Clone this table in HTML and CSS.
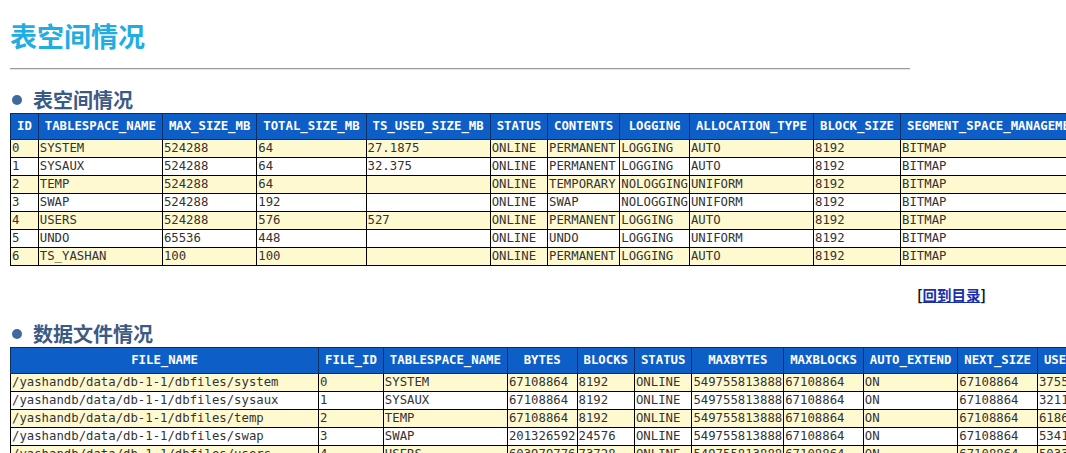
FILE: index.html
```html
<!DOCTYPE html>
<html lang="zh">
<head>
<meta charset="utf-8">
<title>表空间情况</title>
<link rel="stylesheet" href="styles.css">
</head>
<body>
<div class="page">
  <h1 class="title">表空间情况</h1>
  <hr class="rule">
  <h2 class="section">表空间情况</h2>
  <table class="grid">
    <thead>
      <tr><th>ID</th><th>TABLESPACE_NAME</th><th>MAX_SIZE_MB</th><th>TOTAL_SIZE_MB</th><th>TS_USED_SIZE_MB</th><th>STATUS</th><th>CONTENTS</th><th>LOGGING</th><th>ALLOCATION_TYPE</th><th>BLOCK_SIZE</th><th>SEGMENT_SPACE_MANAGEMENT</th></tr>
    </thead>
    <tbody>
      <tr><td>0</td><td>SYSTEM</td><td>524288</td><td>64</td><td>27.1875</td><td>ONLINE</td><td>PERMANENT</td><td>LOGGING</td><td>AUTO</td><td>8192</td><td>BITMAP</td></tr>
      <tr><td>1</td><td>SYSAUX</td><td>524288</td><td>64</td><td>32.375</td><td>ONLINE</td><td>PERMANENT</td><td>LOGGING</td><td>AUTO</td><td>8192</td><td>BITMAP</td></tr>
      <tr><td>2</td><td>TEMP</td><td>524288</td><td>64</td><td></td><td>ONLINE</td><td>TEMPORARY</td><td>NOLOGGING</td><td>UNIFORM</td><td>8192</td><td>BITMAP</td></tr>
      <tr><td>3</td><td>SWAP</td><td>524288</td><td>192</td><td></td><td>ONLINE</td><td>SWAP</td><td>NOLOGGING</td><td>UNIFORM</td><td>8192</td><td>BITMAP</td></tr>
      <tr><td>4</td><td>USERS</td><td>524288</td><td>576</td><td>527</td><td>ONLINE</td><td>PERMANENT</td><td>LOGGING</td><td>AUTO</td><td>8192</td><td>BITMAP</td></tr>
      <tr><td>5</td><td>UNDO</td><td>65536</td><td>448</td><td></td><td>ONLINE</td><td>UNDO</td><td>LOGGING</td><td>UNIFORM</td><td>8192</td><td>BITMAP</td></tr>
      <tr><td>6</td><td>TS_YASHAN</td><td>100</td><td>100</td><td></td><td>ONLINE</td><td>PERMANENT</td><td>LOGGING</td><td>AUTO</td><td>8192</td><td>BITMAP</td></tr>
    </tbody>
  </table>
  <div class="back">[<a href="#">回到目录</a>]</div>
  <h2 class="section">数据文件情况</h2>
  <table class="grid">
    <thead>
      <tr><th class="fname">FILE_NAME</th><th>FILE_ID</th><th>TABLESPACE_NAME</th><th>BYTES</th><th>BLOCKS</th><th>STATUS</th><th>MAXBYTES</th><th>MAXBLOCKS</th><th>AUTO_EXTEND</th><th>NEXT_SIZE</th><th>USER_BYTES</th></tr>
    </thead>
    <tbody>
      <tr><td>/yashandb/data/db-1-1/dbfiles/system</td><td>0</td><td>SYSTEM</td><td>67108864</td><td>8192</td><td>ONLINE</td><td>549755813888</td><td>67108864</td><td>ON</td><td>67108864</td><td>37552128</td></tr>
      <tr><td>/yashandb/data/db-1-1/dbfiles/sysaux</td><td>1</td><td>SYSAUX</td><td>67108864</td><td>8192</td><td>ONLINE</td><td>549755813888</td><td>67108864</td><td>ON</td><td>67108864</td><td>32112640</td></tr>
      <tr><td>/yashandb/data/db-1-1/dbfiles/temp</td><td>2</td><td>TEMP</td><td>67108864</td><td>8192</td><td>ONLINE</td><td>549755813888</td><td>67108864</td><td>ON</td><td>67108864</td><td>61865984</td></tr>
      <tr><td>/yashandb/data/db-1-1/dbfiles/swap</td><td>3</td><td>SWAP</td><td>201326592</td><td>24576</td><td>ONLINE</td><td>549755813888</td><td>67108864</td><td>ON</td><td>67108864</td><td>53411840</td></tr>
      <tr><td>/yashandb/data/db-1-1/dbfiles/users</td><td>4</td><td>USERS</td><td>603979776</td><td>73728</td><td>ONLINE</td><td>549755813888</td><td>67108864</td><td>ON</td><td>67108864</td><td>50331648</td></tr>
      <tr><td>/yashandb/data/db-1-1/dbfiles/undo</td><td>5</td><td>UNDO</td><td>469762048</td><td>57344</td><td>ONLINE</td><td>549755813888</td><td>67108864</td><td>ON</td><td>67108864</td><td>46137344</td></tr>
      <tr><td>/yashandb/data/db-1-1/dbfiles/ts_yashan</td><td>6</td><td>TS_YASHAN</td><td>104857600</td><td>12800</td><td>ONLINE</td><td>549755813888</td><td>67108864</td><td>ON</td><td>67108864</td><td>1048576</td></tr>
    </tbody>
  </table>
</div>
</body>
</html>
```

FILE: styles.css
```css
html, body {
  margin: 0;
  padding: 0;
  background: #ffffff;
}

body {
  font-family: "Noto Sans CJK SC", "Noto Sans", sans-serif;
  color: #222;
  overflow: hidden;
}

.page {
  padding: 20px 0 0 10px;
}

.title {
  margin: 0;
  font-size: 27px;
  line-height: 32px;
  font-weight: bold;
  color: #1fade2;
}

.rule {
  width: 900px;
  margin: 16px 0 0 0;
  border: 0;
  border-top: 1px solid #9a9a9a;
  border-bottom: 1px solid #e6e6e6;
  height: 0;
}

.section {
  display: flex;
  align-items: center;
  gap: 11px;
  margin: 18px 0 1px 0;
  font-size: 20px;
  line-height: 24px;
  font-weight: bold;
  color: #3b5a85;
}

.section::before {
  content: "";
  flex: none;
  width: 10px;
  height: 10px;
  border-radius: 50%;
  background: #3f6aa0;
  margin-left: 2px;
}

.back {
  width: 976px;
  text-align: right;
  font-size: 14.5px;
  line-height: 20px;
  font-weight: bold;
  color: #111;
  margin-top: 19px;
}

.back a {
  color: #1a2fb0;
  text-decoration: underline;
}

.back + .section {
  margin-top: 17px;
}

.grid {
  border-collapse: collapse;
  font-family: "DejaVu Sans Mono", "Liberation Mono", monospace;
  font-size: 12.3px;
  white-space: nowrap;
  border: 1px solid #000;
}

.grid th {
  background: #0d5ec6;
  color: #ffffff;
  font-weight: bold;
  text-align: center;
  padding: 4px 6px;
  line-height: 17px;
  border: 1px solid #0a2f66;
}

.grid td {
  padding: 0 1px;
  height: 17px;
  line-height: 17px;
  border: 1px solid #000;
  color: #333;
  text-align: left;
}

.grid tbody tr:nth-child(odd) td {
  background: #fff9d0;
}

.grid tbody tr:nth-child(even) td {
  background: #ffffff;
}

.grid th.fname {
  min-width: 295px;
}
```
